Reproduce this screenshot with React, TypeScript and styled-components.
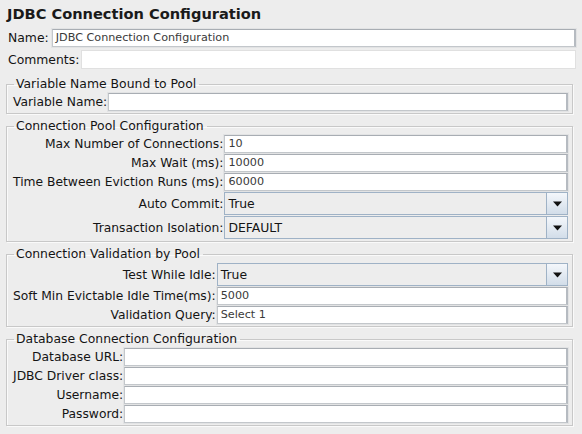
import * as React from 'react';
import styled, { createGlobalStyle } from 'styled-components';

const GlobalStyle = createGlobalStyle`
  html, body {
    margin: 0;
    padding: 0;
    background: #ededed;
  }
  body {
    font-family: "DejaVu Sans", "Liberation Sans", sans-serif;
    color: #141414;
  }
`;

interface Field {
    label: string;
    value?: string;
    combo?: boolean;
}

const sections: { title: string; fields: Field[] }[] = [
    {
        title: 'Variable Name Bound to Pool',
        fields: [{ label: 'Variable Name:' }],
    },
    {
        title: 'Connection Pool Configuration',
        fields: [
            { label: 'Max Number of Connections:', value: '10' },
            { label: 'Max Wait (ms):', value: '10000' },
            { label: 'Time Between Eviction Runs (ms):', value: '60000' },
            { label: 'Auto Commit:', value: 'True', combo: true },
            { label: 'Transaction Isolation:', value: 'DEFAULT', combo: true },
        ],
    },
    {
        title: 'Connection Validation by Pool',
        fields: [
            { label: 'Test While Idle:', value: 'True', combo: true },
            { label: 'Soft Min Evictable Idle Time(ms):', value: '5000' },
            { label: 'Validation Query:', value: 'Select 1' },
        ],
    },
    {
        title: 'Database Connection Configuration',
        fields: [
            { label: 'Database URL:' },
            { label: 'JDBC Driver class:' },
            { label: 'Username:' },
            { label: 'Password:' },
        ],
    },
];

const App: React.FC = () => {
    return (
        <Page>
            <GlobalStyle />
            <Title>JDBC Connection Configuration</Title>

            <TopRow>
                <Label>Name:</Label>
                <TextField value="JDBC Connection Configuration" />
            </TopRow>
            <TopRow>
                <Label width={70}>Comments:</Label>
                <CommentArea />
            </TopRow>

            {sections.map((s) => (
                <Panel key={s.title}>
                    <Legend>{s.title}</Legend>
                    <FormGrid>
                        {s.fields.map((f) => (
                            <React.Fragment key={f.label}>
                                <GridLabel>{f.label}</GridLabel>
                                {f.combo ? (
                                    <Combo>
                                        <ComboText>{f.value}</ComboText>
                                        <ComboButton>
                                            <svg width="9" height="6" viewBox="0 0 9 6">
                                                <path d="M0 0.5h9L4.5 5.5z" fill="#111" />
                                            </svg>
                                        </ComboButton>
                                    </Combo>
                                ) : (
                                    <TextField value={f.value} />
                                )}
                            </React.Fragment>
                        ))}
                    </FormGrid>
                </Panel>
            ))}
        </Page>
    );
};

const TextField: React.FC<{ value?: string }> = ({ value }) => (
    <Input>{value}</Input>
);

const Page = styled.div`
    width: 582px;
    height: 434px;
    box-sizing: border-box;
    padding: 4px 6px 0 6px;
    display: flex;
    flex-direction: column;
`;

const Title = styled.h1`
    margin: 0 0 5px 1px;
    font-size: 14.6px;
    font-weight: bold;
    line-height: 19px;
    color: #1a1a1a;
`;

const TopRow = styled.div`
    display: flex;
    align-items: center;
    gap: 3px;
    margin-left: 2px;
    margin-bottom: 3px;
    height: 19px;
`;

const Label = styled.span<{ width?: number }>`
    font-size: 12.4px;
    white-space: nowrap;
    width: ${(p) => (p.width ? `${p.width}px` : 'auto')};
`;

const Input = styled.div`
    flex: 1;
    box-sizing: border-box;
    height: 18px;
    background: #fff;
    border: 1px solid #c3c7cb;
    border-top-color: #a8adb3;
    border-right: 2px solid #b6bbc1;
    box-shadow: 0 0 0 1px #e2e3e4;
    font-size: 11.2px;
    line-height: 16px;
    padding-left: 3px;
    color: #3a3a3a;
    white-space: nowrap;
    overflow: hidden;
`;

const CommentArea = styled.div`
    flex: 1;
    align-self: stretch;
    background: #fff;
    border: 1px solid #e0e0e0;
`;

const Panel = styled.fieldset`
    margin: 5px 3px 0 0;
    padding: 2px 4px 2px 6px;
    border: 1px solid #c8c8c8;
    box-shadow: inset 1px 1px 0 #fafafa, 1px 1px 0 #fafafa;
`;

const Legend = styled.legend`
    font-size: 12.4px;
    padding: 0 3px 0 2px;
    margin-left: 1px;
    line-height: 14px;
`;

const FormGrid = styled.div`
    display: grid;
    grid-template-columns: max-content 1fr;
    column-gap: 1px;
    row-gap: 1px;
    align-items: center;
`;

const GridLabel = styled.span`
    font-size: 12.3px;
    line-height: 14px;
    justify-self: end;
    white-space: nowrap;
`;

const Combo = styled.div`
    display: flex;
    height: 23px;
    box-sizing: border-box;
    border: 1px solid #9fb2c6;
    background: #ededed;
`;

const ComboText = styled.span`
    flex: 1;
    font-size: 12.4px;
    line-height: 21px;
    padding-left: 3px;
`;

const ComboButton = styled.div`
    width: 20px;
    display: flex;
    align-items: center;
    justify-content: center;
    border-left: 1px solid #9fb2c6;
    background: linear-gradient(#f4f7fb, #d2dde9);
`;

export default App;
